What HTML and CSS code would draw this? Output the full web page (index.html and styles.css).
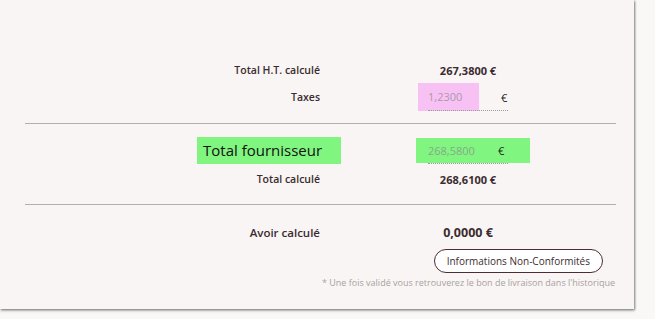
FILE: index.html
```html
<!DOCTYPE html>
<html lang="fr">
<head>
    <meta charset="UTF-8">
    <title>Récapitulatif</title>
    <link rel="stylesheet" href="styles.css">
</head>
<body>
    <div class="card">
        <div class="totals">
            <div class="row row-ht">
                <span class="label">Total H.T. calculé</span>
                <span class="value">267,3800 €</span>
            </div>
            <div class="row row-tax">
                <span class="label">Taxes</span>
                <span class="field">
                    <span class="hl-pink">1,2300</span>
                    <span class="euro">€</span>
                </span>
            </div>
        </div>

        <hr class="sep">

        <div class="totals">
            <div class="row row-supplier">
                <span class="label supplier"><span class="hl-green">Total fournisseur</span></span>
                <span class="field field-green">
                    <span class="amount">268,5800</span>
                    <span class="euro">€</span>
                </span>
            </div>
            <div class="row row-calc">
                <span class="label">Total calculé</span>
                <span class="value">268,6100 €</span>
            </div>
        </div>

        <hr class="sep sep-2">

        <div class="totals">
            <div class="row row-credit">
                <span class="label big">Avoir calculé</span>
                <span class="value big">0,0000 €</span>
            </div>
        </div>

        <div class="actions">
            <button class="btn-outline">Informations Non-Conformités</button>
            <p class="note">* Une fois validé vous retrouverez le bon de livraison dans l'historique</p>
        </div>
    </div>
</body>
</html>
```

FILE: styles.css
```css
html, body {
    margin: 0;
    padding: 0;
    height: 100%;
    background-color: #faf8f7;
}
body {
    font-family: "Open Sans", Arial, sans-serif;
    color: #3b2c30;
}
.card {
    width: 634px;
    height: 309px;
    box-sizing: border-box;
    overflow: hidden;
    background-color: #f9f5f4;
    box-shadow: 1px 1px 2px rgba(0,0,0,0.45), 0 2px 3px rgba(0,0,0,0.15);
    padding-top: 59px;
}
.totals {
    display: flex;
    flex-direction: column;
}
.row {
    display: flex;
    align-items: center;
}
.row .label {
    width: 320px;
    text-align: right;
    font-size: 10.5px;
    font-weight: 600;
}
.row .value {
    width: 80px;
    margin-left: 108px;
    text-align: center;
    font-size: 11px;
    font-weight: 700;
}
.row-ht {
    height: 22px;
}
.row-tax {
    height: 32px;
}
.field {
    margin-left: 98px;
    position: relative;
    display: flex;
    align-items: center;
    height: 28px;
    font-size: 11px;
}
.field::after {
    content: "";
    position: absolute;
    left: 10px;
    width: 80px;
    bottom: 0;
    border-bottom: 1px dotted #9a9a9a;
}
.hl-pink {
    background-color: #f8c1f4;
    width: 61px;
    height: 28px;
    line-height: 28px;
    padding-left: 10px;
    box-sizing: border-box;
    color: #a99aa8;
}
.euro {
    margin-left: 22px;
    color: #222;
}
.sep {
    margin: 10px 18px 0 25px;
    border: 0;
    border-top: 1px solid #b3adad;
}
.sep-2 {
    margin-top: 9px;
}
.row-supplier {
    margin-top: 14px;
    height: 25px;
}
.label.supplier {
    width: auto;
    margin-left: 197px;
    text-align: left;
}
.hl-green {
    display: block;
    background-color: #80f580;
    width: 144px;
    height: 27px;
    line-height: 27px;
    padding-left: 6px;
    box-sizing: border-box;
    font-size: 15px;
    font-weight: 400;
    color: #111;
}
.field-green {
    margin-left: 75px;
    background-color: #80f580;
    width: 114px;
    height: 25px;
    padding-left: 12px;
    box-sizing: border-box;
}
.field-green::after {
    left: 12px;
    bottom: -1px;
}
.field-green .amount {
    color: #8aa88a;
}
.field-green .euro {
    margin-left: 23px;
}
.row-calc {
    height: 32px;
}
.row-credit {
    margin-top: 13px;
    height: 28px;
}
.label.big {
    font-size: 11.5px;
}
.value.big {
    font-size: 12.5px;
}
.actions {
    display: flex;
    flex-direction: column;
    align-items: flex-end;
    padding-right: 19px;
}
.btn-outline {
    margin-right: 12px;
    margin-top: 3px;
    height: 24px;
    padding: 0 12px;
    border: 1px solid #4a2d35;
    border-radius: 12px;
    background: #fff;
    color: #3b2c30;
    font-family: "Open Sans", Arial, sans-serif;
    font-size: 10px;
}
.note {
    margin: 3px 0 0;
    font-size: 9px;
    color: #a8a2a2;
}
```
